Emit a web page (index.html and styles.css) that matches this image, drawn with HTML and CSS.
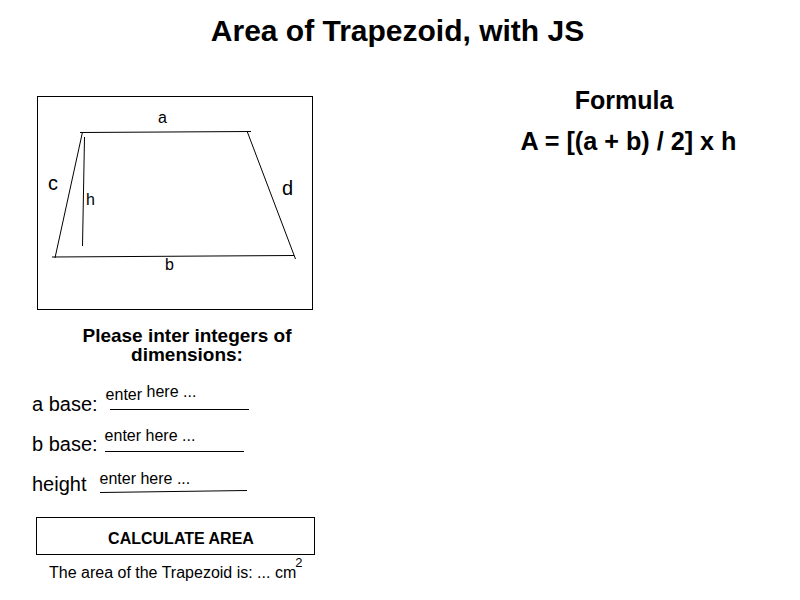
FILE: index.html
```html
<!DOCTYPE html>
<html lang="en">
<head>
    <meta charset="UTF-8">
    <meta name="viewport" content="width=device-width, initial-scale=1.0">
    <title>Area of Trapezoid, with JS</title>
    <link rel="stylesheet" href="styles.css">
</head>
<body>
    <h1 class="title">Area of Trapezoid, with JS</h1>
    <div class="main">
        <div class="left">
            <svg class="diagram" viewBox="38 97 274 212" xmlns="http://www.w3.org/2000/svg">
                <g class="edges">
                    <line x1="80" y1="132.5" x2="251" y2="131.5"></line>
                    <line x1="82.5" y1="132" x2="55" y2="258"></line>
                    <line x1="247" y1="131" x2="295.5" y2="259"></line>
                    <line x1="52" y1="257" x2="294" y2="255.5"></line>
                    <line x1="84.5" y1="137" x2="82.5" y2="246"></line>
                </g>
                <text class="small" x="158" y="123">a</text>
                <text class="big" x="48" y="190">c</text>
                <text class="small" x="86" y="205">h</text>
                <text class="big" x="282" y="195">d</text>
                <text class="small" x="165" y="270">b</text>
            </svg>
            <h3 class="prompt">Please inter integers of dimensions:</h3>
            <div class="row row-a">
                <span class="label">a base:</span>
                <div class="field">
                    <span class="hint"><span class="hint-low">enter</span> here ...</span>
                    <div class="rule"></div>
                </div>
            </div>
            <div class="row row-b">
                <span class="label">b base:</span>
                <div class="field">
                    <span class="hint">enter here ...</span>
                    <div class="rule"></div>
                </div>
            </div>
            <div class="row row-h">
                <span class="label">height</span>
                <div class="field">
                    <span class="hint">enter here ...</span>
                    <svg class="slant" viewBox="0 0 148 3" xmlns="http://www.w3.org/2000/svg">
                        <line x1="0" y1="2.5" x2="147" y2="0.5"></line>
                    </svg>
                </div>
            </div>
            <button class="calc" type="button">CALCULATE AREA</button>
            <p class="result">The area of the Trapezoid is: ... cm<sup>2</sup></p>
        </div>
        <div class="right">
            <h2 class="formula-title">Formula</h2>
            <h2 class="formula">A = [(a + b) / 2] x h</h2>
        </div>
    </div>
</body>
</html>
```

FILE: styles.css
```css
body {
    font-family: "Liberation Sans", Arial, sans-serif;
    color: #000000;
    background-color: #ffffff;
    margin: 0;
}

.title {
    font-size: 30px;
    line-height: 34px;
    font-weight: bold;
    text-align: center;
    margin: 14px 5px 0 0;
}

.main {
    display: flex;
    margin-top: 38px;
    padding-left: 32px;
}

.left {
    width: 290px;
    flex-shrink: 0;
    padding-top: 10px;
}

.right {
    margin-left: 177px;
    width: 259px;
    text-align: center;
}

.diagram {
    display: block;
    box-sizing: border-box;
    width: 276px;
    height: 214px;
    margin-left: 5px;
    border: 1px solid #000000;
}

.edges line,
.slant line {
    stroke: #000000;
    stroke-width: 1;
}

.small {
    font-size: 16px;
}

.big {
    font-size: 20px;
}

.prompt {
    font-size: 19px;
    line-height: 19px;
    font-weight: bold;
    text-align: center;
    width: 280px;
    margin: 16px 0 0 15px;
}

.row {
    display: flex;
    align-items: flex-end;
}

.row-a {
    margin-top: 24px;
    height: 28px;
}

.row-b {
    margin-top: 12px;
    height: 28px;
}

.row-h {
    margin-top: 12px;
    height: 28px;
}

.label {
    font-size: 20px;
    line-height: 23px;
}

.field {
    display: flex;
    flex-direction: column;
    font-size: 16px;
    line-height: 18px;
}

.hint-low {
    position: relative;
    top: 3px;
}

.rule {
    height: 1px;
    background-color: #000000;
}

.row-a .field {
    margin-left: 8px;
    margin-bottom: 6px;
}

.row-a .rule {
    width: 139px;
    margin-left: 4px;
    margin-top: 8px;
}

.row-b .field {
    margin-left: 7px;
    margin-bottom: 4px;
}

.row-b .rule {
    width: 139px;
    margin-top: 6px;
}

.row-h .field {
    margin-left: 13px;
    margin-bottom: 3px;
}

.slant {
    display: block;
    width: 148px;
    height: 3px;
    margin-top: 2px;
}

.calc {
    display: block;
    box-sizing: border-box;
    width: 279px;
    height: 38px;
    margin: 21px 0 0 4px;
    padding: 5px 0 0 11px;
    font-family: inherit;
    font-size: 16px;
    font-weight: bold;
    color: #000000;
    background-color: #ffffff;
    border: 1px solid #000000;
}

.result {
    font-size: 16px;
    line-height: 18px;
    margin: 9px 0 0 17px;
    white-space: nowrap;
}

.result sup {
    font-size: 13px;
    line-height: 0;
    position: relative;
    top: -5px;
    left: -1px;
    vertical-align: super;
}

.formula-title {
    font-size: 25px;
    line-height: 29px;
    font-weight: bold;
    margin: 0 9px 0 0;
}

.formula {
    font-size: 25.2px;
    line-height: 29px;
    font-weight: bold;
    margin: 12px 0 0;
}
```
